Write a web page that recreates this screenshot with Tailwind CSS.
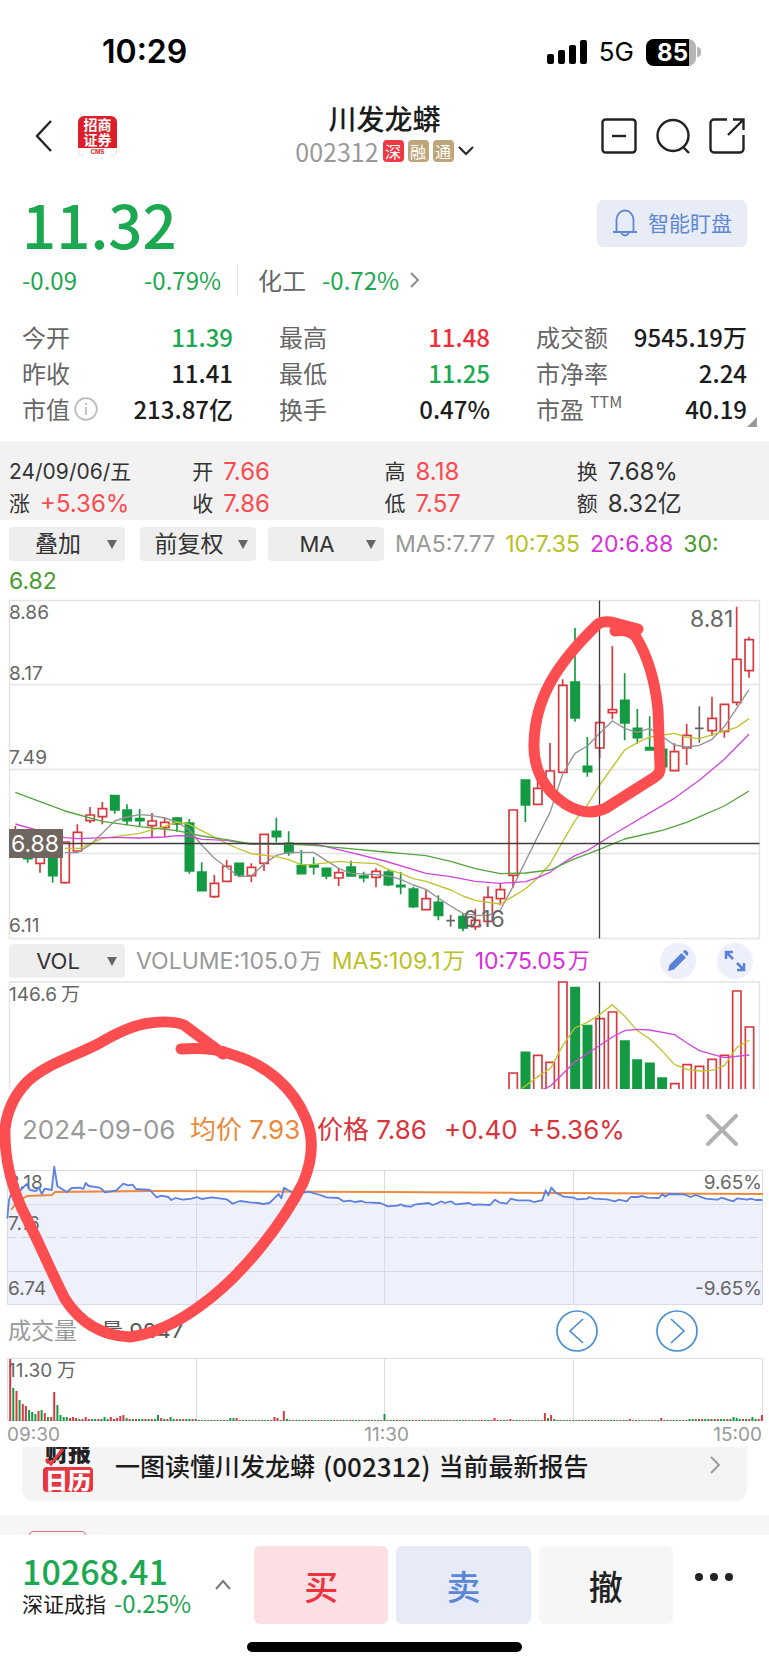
<!DOCTYPE html>
<html lang="zh-CN">
<head>
<meta charset="utf-8">
<meta name="viewport" content="width=device-width, initial-scale=1">
<title>川发龙蟒 002312</title>
<script src="https://cdn.jsdelivr.net/npm/@tailwindcss/browser@4"></script>
</head>
<body class="bg-white text-[#1c1c1c] font-['Noto_Sans_CJK_SC',sans-serif] overflow-x-hidden">

<!-- Status bar -->
<div class="flex items-center justify-between h-[101px] pt-[3px] pl-[102px] pr-[68px] font-['Inter','Noto_Sans_CJK_SC',sans-serif] text-black">
  <span class="text-[32px] leading-[36px] font-semibold">10:29</span>
  <div class="flex items-center">
    <svg class="w-10 h-6" viewBox="0 0 40 24"><rect x="0" y="14" width="7" height="10" rx="2"/><rect x="11" y="10" width="7" height="14" rx="2"/><rect x="22" y="5" width="7" height="19" rx="2"/><rect x="33" y="0" width="7" height="24" rx="2"/></svg>
    <span class="text-[26px] leading-[30px] ml-3">5G</span>
    <div class="ml-3 flex items-center">
      <div class="w-[50px] h-[27px] rounded-lg overflow-hidden flex bg-[#b5b5b5]"><span class="w-[43px] bg-black text-white font-bold text-[24px] leading-[27px] text-right pr-px">85</span></div>
      <span class="w-1 h-2.5 ml-px rounded-r-full bg-[#b5b5b5]"></span>
    </div>
  </div>
</div>

<!-- Title bar -->
<header class="grid grid-cols-[1fr_auto_1fr] items-center h-[70px] px-6 mb-[19px]">
  <div class="flex items-center gap-6 pl-2.5">
    <button aria-label="返回" class="w-5 h-9"><svg viewBox="0 0 20 36" class="w-5 h-9" fill="none" stroke="#222" stroke-width="2.4"><path d="M17 3 3 18l14 15"/></svg></button>
    <div class="w-[39px] h-10 rounded-md overflow-hidden bg-[#dc1e28] text-white text-[14px] leading-[15px] font-bold text-center flex flex-col justify-between">
      <div class="pt-px">招商<br>证券</div>
      <div class="bg-white text-[#dc1e28] text-[6px] leading-[8px] font-['Inter',sans-serif]">CMS</div>
    </div>
  </div>
  <div class="text-center pb-1">
    <h1 class="text-[28px] leading-[34px] font-medium">川发龙蟒</h1>
    <button class="flex items-center gap-1 h-8 text-[25px] leading-8 text-[#999]"><span>002312</span>
      <span class="w-[21px] h-[22px] rounded bg-[#ee3844] text-white text-[16px] leading-[22px]">深</span>
      <span class="w-[21px] h-[22px] rounded bg-[#bfa57a] text-white text-[16px] leading-[22px]">融</span>
      <span class="w-[21px] h-[22px] rounded bg-[#bfa57a] text-white text-[16px] leading-[22px]">通</span>
      <svg class="w-4 h-3" viewBox="0 0 16 12" fill="none" stroke="#222" stroke-width="2"><path d="m1 2 7 7 7-7"/></svg>
    </button>
  </div>
  <div class="flex items-center justify-end gap-[18px]">
    <button aria-label="移出自选"><svg class="size-9" viewBox="0 0 36 36" fill="none" stroke="#222" stroke-width="2.4"><rect x="1.500" y="1.500" width="33" height="33" rx="3"/><path d="M11 18h14"/></svg></button>
    <button aria-label="搜索"><svg class="size-9" viewBox="0 0 36 36" fill="none" stroke="#222" stroke-width="2.4"><circle cx="18" cy="17.500" r="15.500"/><path d="m28 29 6 6"/></svg></button>
    <button aria-label="分享"><svg class="size-9" viewBox="0 0 36 36" fill="none" stroke="#222" stroke-width="2.4"><path d="M18 1.500H5A3.500 3.500 0 0 0 1.500 5v26A3.500 3.500 0 0 0 5 34.500h26a3.500 3.500 0 0 0 3.500-3.500V17M19 17 34 2M24 1.500h10.500V12"/></svg></button>
  </div>
</header>

<!-- Quote -->
<section class="px-[22px]">
  <div class="flex items-center justify-between h-[66px]">
    <div class="text-[60px] leading-[66px] font-medium text-[#1ca850]">11.32</div>
    <button class="flex items-center justify-center gap-2.5 w-[150px] h-[47px] rounded-md bg-[#e8ecf7] text-[#5f87d3] text-[21px]">
      <svg class="w-[26px] h-7" viewBox="0 0 26 28" fill="none" stroke="#5f87d3" stroke-width="1.8"><path d="M1 23h24M4.500 23V11a8.500 9.500 0 0 1 17 0v12M9.500 23.500a3.500 3 0 0 0 7 0"/></svg>智能盯盘</button>
  </div>
  <div class="flex items-center h-10 mt-1 text-[24px] leading-10 text-[#1ca850]">
    <span class="w-[122px]">-0.09</span><span class="w-[93px]">-0.79%</span>
    <span class="w-px h-8 bg-[#e8e8e8]"></span>
    <a href="#" class="flex items-center ml-5"><span class="text-[#666] mr-4">化工</span><span>-0.72%</span>
      <svg class="w-3 h-5 ml-2.5" viewBox="0 0 12 20" fill="none" stroke="#888" stroke-width="1.800"><path d="m2 3 7 7-7 7"/></svg></a>
  </div>
  <dl class="relative grid grid-cols-3 gap-x-[46px] mt-[19px] text-[24px] leading-9 font-medium">
    <div class="flex justify-between"><dt class="text-[#666] font-normal">今开</dt><dd class="text-[#1ca850]">11.39</dd></div>
    <div class="flex justify-between"><dt class="text-[#666] font-normal">最高</dt><dd class="text-[#ed2f3b]">11.48</dd></div>
    <div class="flex justify-between"><dt class="text-[#666] font-normal">成交额</dt><dd>9545.19万</dd></div>
    <div class="flex justify-between"><dt class="text-[#666] font-normal">昨收</dt><dd>11.41</dd></div>
    <div class="flex justify-between"><dt class="text-[#666] font-normal">最低</dt><dd class="text-[#1ca850]">11.25</dd></div>
    <div class="flex justify-between"><dt class="text-[#666] font-normal">市净率</dt><dd>2.24</dd></div>
    <div class="flex justify-between"><dt class="text-[#666] font-normal flex items-center gap-1">市值<svg class="size-6" viewBox="0 0 24 24" fill="none" stroke="#bbb" stroke-width="1.700"><circle cx="12" cy="12" r="10.800"/><path d="M12 10v8M12 6v2"/></svg></dt><dd>213.87亿</dd></div>
    <div class="flex justify-between"><dt class="text-[#666] font-normal">换手</dt><dd>0.47%</dd></div>
    <div class="flex justify-between"><dt class="text-[#666] font-normal flex">市盈<span class="text-[16px] leading-5 ml-1.5">TTM</span></dt><dd>40.19</dd></div>
    <svg class="absolute -right-2.5 bottom-0 size-2.5" viewBox="0 0 10 10"><path d="M10 0v10H0z" fill="#999"/></svg>
  </dl>
</section>

<!-- Selected day -->
<section class="mt-[14px] pt-[15px] bg-[#f2f2f2] grid grid-cols-4 text-[24px] leading-8 text-[#333] font-['Inter','Noto_Sans_CJK_SC',sans-serif]">
  <div class="pl-[9px] text-[21px]">24/09/06/五</div>
  <div class="flex gap-2.5"><span class="text-[21px]">开</span><span class="text-[#fa4b50]">7.66</span></div>
  <div class="flex gap-2.5"><span class="text-[21px]">高</span><span class="text-[#fa4b50]">8.18</span></div>
  <div class="flex gap-2.5"><span class="text-[21px]">换</span><span>7.68%</span></div>
  <div class="pl-[9px] flex gap-2.5"><span class="text-[21px]">涨</span><span class="text-[#fa4b50]">+5.36%</span></div>
  <div class="flex gap-2.5"><span class="text-[21px]">收</span><span class="text-[#fa4b50]">7.86</span></div>
  <div class="flex gap-2.5"><span class="text-[21px]">低</span><span class="text-[#fa4b50]">7.57</span></div>
  <div class="flex gap-2.5"><span class="text-[21px]">额</span><span>8.32亿</span></div>
</section>

<!-- Overlay selectors and moving averages -->
<section class="px-[9px] pt-[7px] text-[23px] font-['Inter','Noto_Sans_CJK_SC',sans-serif]">
  <div class="flex items-center h-[34px] whitespace-nowrap">
    <button class="flex items-center justify-end w-[116px] h-[34px] rounded bg-[#eee] pr-2 text-[23px] text-[#333]"><span class="flex-1 text-center">叠加</span><span class="border-x-[5px] border-t-[9px] border-x-transparent border-t-[#666]"></span></button>
    <button class="flex items-center justify-end w-[116px] h-[34px] rounded bg-[#eee] pr-2 text-[23px] text-[#333] ml-[15px]"><span class="flex-1 text-center">前复权</span><span class="border-x-[5px] border-t-[9px] border-x-transparent border-t-[#666]"></span></button>
    <button class="flex items-center justify-end w-[116px] h-[34px] rounded bg-[#eee] pr-2 text-[22px] text-[#333] ml-3"><span class="flex-1 text-center">MA</span><span class="border-x-[5px] border-t-[9px] border-x-transparent border-t-[#666]"></span></button>
    <span class="ml-[11px] text-[#999]">MA5:7.77</span><span class="ml-2.5 text-[#b9c022]">10:7.35</span><span class="ml-2.5 text-[#d92fd9]">20:6.88</span><span class="ml-2.5 text-[#459b2c]">30:</span>
  </div>
  <div class="h-[38px] leading-[40px] text-[#459b2c]">6.82</div>
</section>

<!-- Daily candles -->
<svg class="block w-full font-['Inter',sans-serif]" viewBox="0 599 769 344" fill="none" role="img" aria-label="日K线图">
  <path d="M9.500 600.500h750v338h-750zM9.500 684.500h750M9.500 769.500h750M9.500 853.500h750" stroke="#e4e4e6" stroke-width="1.300"/>
  <g id="candles"></g>
  <g transform="translate(0 590) scale(.33333)" stroke-width="4" stroke-linejoin="round">
    <path stroke="#939393" d="M195 788h37l38-23 37-35 37-37 37-12 38-7 37 3 38 7 37 12 37 24 37 45 38 40 37 27 37 28 37-2 38-36 37-26 37-9h75l38 25 37 23 37 15 75 4 37 4 37 10 38 17 38 13 37 26 37 24 37 22 37 6h38l37-16 38-70 37-75 37-75 37-72 38-116 37-62 37-22 37-38 38-37 37 22 38 12 37-12 38 25 36 25 37 6 38-5 38-18 37-38 37-55 37-56"/>
    <path stroke="#c0c42c" d="M195 775h45l67-30 112-15 75-21 37-13 37 7 37 19 75 38 37 17 37 14 75 9 37 9 38 15 37-1 75-9 37 3 75 4 37 17 37 12 38 16 38 8 74 26 37 18 37 13 75 11 75-45 37-33 37-42 38-67 37-63 37-47 37-60 75-105 38-22 37-17 74-11 37 12 38 4 112-34 37-26"/>
    <path stroke="#d147d9" d="M46 702l74 21 75 20 37 3 112-4 75 2 75-3 37-4 37 1 37 10 75 3 74 12 187-1 38 8 74 18 102 25 123 37 74 10 74 14 75 6 75-5 37-12 37-16 38-27 37-23 37-15 75-47 186-110 75-54 75-63 74-75"/>
    <path stroke="#54a43d" d="M46 607l74 28 75 28 112 31 112 16 112 12 74 16 75 11 74 13h112l75 4 75 7 139 13 47 4 76 7 74 17 74 22 75 15 75-2 74-9 75-34 74-28 75-31 113-26 73-24 113-49 74-45"/>
  </g>
  <path d="M599.500 600.500v338M9.500 843.500h750" stroke="#403c3c" stroke-width="1.300"/>
  <g fill="#666" font-size="19"><text x="9" y="619">8.86</text><text x="9" y="680">8.17</text><text x="9" y="764">7.49</text><text x="9" y="932">6.11</text></g>
  <g fill="#666" font-size="23"><text x="690" y="627">8.81</text><text x="463" y="927">6.16</text></g>
  <path d="M9 829h54v29H9z" fill="#6e665f"/><text x="11" y="852" font-size="23" fill="#fff">6.88</text>
  <path d="M615 631Q629 629 636 637C650 660 656 690 658 710L660 766Q661 773 655 777L606 808C590 816 570 812 551 792Q533 772 534 743C535 700 555 665 598 624Q604 620 615 623L638 629" stroke="#fc4e50" stroke-width="11" stroke-linecap="round" stroke-linejoin="round"/>
</svg>

<div class="relative">
  <!-- Volume -->
  <section class="flex items-center h-[36px] px-[9px] text-[23px] whitespace-nowrap font-['Inter','Noto_Sans_CJK_SC',sans-serif]">
    <button class="flex items-center justify-end w-[116px] h-[34px] rounded bg-[#eee] pr-2 text-[22px] text-[#333]"><span class="flex-1 text-center">VOL</span><span class="border-x-[5px] border-t-[9px] border-x-transparent border-t-[#666]"></span></button>
    <span class="ml-[11px] text-[#999] flex gap-0.5"><span>VOLUME:105.0</span><span class="text-[22px]">万</span></span><span class="ml-2.5 text-[#b9c022] flex gap-0.5"><span>MA5:109.1</span><span class="text-[22px]">万</span></span><span class="ml-2.5 text-[#d92fd9] flex gap-0.5"><span>10:75.05</span><span class="text-[22px]">万</span></span>
    <div class="ml-auto mr-[7px] flex gap-[21px]">
      <button aria-label="画线" class="size-9 rounded-full bg-[#edf0fa] flex items-center justify-center"><svg class="size-6" viewBox="0 0 24 24" fill="#5a82d4"><path d="m2 22 1.500-6L15.500 4l4.500 4.500L8 20.500zM16.800 2.700 18 1.500q1.200-1 2.400 0L22 3.200q1 1.300 0 2.500l-1 1.300z"/></svg></button>
      <button aria-label="全屏" class="size-9 rounded-full bg-[#edf0fa] flex items-center justify-center"><svg class="size-6" viewBox="0 0 24 24" fill="none" stroke="#5a82d4" stroke-width="2.500"><path d="M3 10V3h7M3 3l7 7M21 14v7h-7M21 21l-7-7"/></svg></button>
    </div>
  </section>
  <svg class="block w-full font-['Inter','Noto_Sans_CJK_SC',sans-serif]" viewBox="0 980 769 110" fill="none" role="img" aria-label="成交量">
    <path d="M9.500 1090V983h750v107" stroke="#e4e4e6" stroke-width="1.300"/>
    <g id="volume"></g>
    <path d="M599.500 983v107" stroke="#403c3c" stroke-width="1.300"/>
    <g transform="translate(480 960) scale(.33333)" stroke-width="4"><path stroke="#c0c42c" d="M125 389l48-36 39-25 36-68 37-54 37-16 38-24 37-29 37 35 37 42 38 25 37 36 38 42 37 14 37 5 38-2 37-14 37-54 38-23"/><path stroke="#d147d9" d="M190 390l22-9 36-36 37-37 112-74 37-19 37-4 38 2 75 14 37 25 37 23 75 21 75-8"/></g>
    <g font-size="19" fill="#666"><text x="9" y="1002">146.6</text><text x="61" y="1002">万</text></g>
  </svg>

  <!-- Intraday panel -->
  <section class="font-['Inter','Noto_Sans_CJK_SC',sans-serif]">
    <div class="flex items-center h-[77px] pt-1 pl-[22px] pr-[31px] text-[26px] whitespace-nowrap text-[#d9343a]">
      <span class="text-[#999] w-[168px]">2024-09-06</span><span class="text-[#e8893a] w-[127px]">均价 7.93</span><span class="w-[127px]">价格 7.86</span><span class="w-[84px]">+0.40</span><span>+5.36%</span>
      <button aria-label="关闭" class="ml-auto"><svg class="size-8" viewBox="0 0 32 32" fill="none" stroke="#b2b2b2" stroke-width="4" stroke-linecap="round"><path d="m2 2 28 28M30 2 2 30"/></svg></button>
    </div>
    <svg class="block w-full" viewBox="0 1166 769 140" fill="none" role="img" aria-label="分时图">
      <path id="fillArea" fill="#eef0fc"/>
      <path d="M7.500 1170.500h755v134h-755zM7.500 1204.500h755M7.500 1271.500h755M196.500 1170.500v134M384.500 1170.500v134M573.500 1170.500v134" stroke="#d9dbe4"/>
      <path d="M7.500 1237.500h755" stroke="#d3d5de" stroke-dasharray="9 4"/>
      <g font-size="19" fill="#666"><text x="8" y="1189">8.18</text><text x="8" y="1230">7.16</text><text x="8" y="1295">6.74</text><text x="762" y="1189" text-anchor="end">9.65%</text><text x="762" y="1295" text-anchor="end">-9.65%</text></g>
      <path d="M11 1210l6-8 10-6 25-1 3-3 95-1 235 1 378 2" stroke="#ee8a3c" stroke-width="2"/>
      <path id="priceLine" stroke="#5b80e0" stroke-width="1.800" stroke-linejoin="round"/>
    </svg>
    <div class="flex items-center h-[50px] pl-2 text-[22px]">
      <span class="w-[93px] text-[23px] text-[#999]">成交量</span><span class="text-[#555] leading-[34px]">量 9847</span>
      <div class="ml-auto mr-[71px] flex gap-[58px]">
        <button aria-label="前一日"><svg class="block size-[42px]" viewBox="0 0 42 42" fill="none" stroke="#4a90d0" stroke-width="1.700"><circle cx="21" cy="21" r="20"/><path d="M27 9 14 21l13 12"/></svg></button>
        <button aria-label="后一日"><svg class="block size-[42px]" viewBox="0 0 42 42" fill="none" stroke="#4a90d0" stroke-width="1.700"><circle cx="21" cy="21" r="20"/><path d="m15 9 13 12-13 12"/></svg></button>
      </div>
    </div>
    <svg class="block w-full" viewBox="0 1356 769 66" fill="none" role="img" aria-label="分时成交量">
      <path d="M7.500 1358.500h755v62h-755zM196.500 1358.500v62M384.500 1358.500v62M573.500 1358.500v62" stroke="#dedee0"/>
      <g id="minutes"></g>
      <g font-size="19" fill="#666"><text x="8" y="1377">11.30</text><text x="57" y="1377">万</text></g>
    </svg>
    <div class="flex justify-between h-[25px] px-[7px] text-[19px] leading-[26px] text-[#999]"><span>09:30</span><span>11:30</span><span>15:00</span></div>
  </section>

  <!-- Hand-drawn ring; the white patch hides the lower edge of the volume reading -->
  <svg class="absolute inset-x-0 top-0 w-full pointer-events-none" viewBox="0 944 769 503" fill="none" stroke="#fc4e50" stroke-width="11" stroke-linecap="round" stroke-linejoin="round"><path d="M98 1339h92v8H98z" fill="#fff" stroke="none"/><path d="M181 1050Q213 1048 230 1055C267 1065 294 1090 306 1120Q318 1148 303 1184C285 1220 245 1275 200 1307Q165 1333 130 1338Q88 1336 65 1300C52 1275 40 1245 22 1210Q4 1170 5 1130Q8 1102 28 1082C45 1066 70 1059 98 1045Q130 1026 150 1024Q172 1021 184 1026L223 1055"/></svg>
</div>

<!-- Report banner -->
<a href="#" class="flex items-start mx-[22px] h-[54px] rounded-b-xl bg-[#f4f4f4] overflow-hidden pl-[21px] pr-[26px]">
  <span class="relative -mt-2.5 w-[50px] text-center font-black text-[23px] leading-7">
    <span class="block text-[#222]">财报</span>
    <span class="block h-[25px] mt-0.5 rounded bg-[#e8353f] text-white leading-[25px]">日历</span>
    <svg class="absolute left-0 top-2.5 w-6 h-5" viewBox="0 0 24 20" fill="none" stroke="#e8353f" stroke-width="3"><path d="m3 12 5 5 12-15"/></svg>
  </span>
  <span class="ml-[22px] text-[25px] leading-[37px] font-medium whitespace-nowrap flex gap-2"><span>一图读懂川发龙蟒</span><span class="text-[26px]">(002312)</span><span>当前最新报告</span></span>
  <svg class="ml-auto w-3 h-6 mt-1.5" viewBox="0 0 12 24" fill="none" stroke="#999" stroke-width="1.800"><path d="m2 4 8 8-8 8"/></svg>
</a>
<div class="mt-[14px] h-5 bg-[#f6f6f6] overflow-hidden pl-[29px] pt-4"><div class="w-[57px] h-6 rounded-sm border border-[#e07080]"></div></div>

<!-- Trade bar -->
<footer class="pt-[11px]">
  <div class="flex h-[78px] pl-[22px] pr-9">
    <a href="#" class="flex items-center w-[232px] shrink-0">
      <span class="w-[186px] pb-2"><span class="block text-[34px] leading-[44px] font-medium text-[#1ca850]">10268.41</span>
      <span class="flex gap-2 text-[21px] leading-5 whitespace-nowrap"><span>深证成指</span><span class="text-[24px] text-[#1ca850]">-0.25%</span></span></span>
      <svg class="w-[18px] h-3 ml-1.5" viewBox="0 0 18 12" fill="none" stroke="#777" stroke-width="2"><path d="m2 10 7-8 7 8"/></svg>
    </a>
    <div class="flex flex-1 gap-2 text-[34px] font-medium">
      <button class="flex-1 rounded-md bg-[#fcdfe2] text-[#ee333f]">买</button>
      <button class="flex-1 rounded-md bg-[#e7ebf8] text-[#5b87d6]">卖</button>
      <button class="flex-1 rounded-md bg-[#f6f6f6] text-[#222]">撤</button>
    </div>
    <button aria-label="更多" class="flex gap-[7px] items-center ml-[22px] h-[62px]"><i class="size-[8px] rounded-full bg-[#222]"></i><i class="size-[8px] rounded-full bg-[#222]"></i><i class="size-[8px] rounded-full bg-[#222]"></i></button>
  </div>
  <div class="mx-auto mt-[18px] mb-[14px] w-[275px] h-[10px] rounded-full bg-black"></div>
</footer>

<script>
const RED = '#d8393f', GREEN = '#149a42';
// Daily bars: x, high, low, body top, body bottom, r/g/n
const bars = [[46,708,800,740,790,'r'],[83,790,818,795,806,'g'],[120,790,848,795,820,'r'],[158,790,878,795,857,'g'],[195,756,881,756,878,'r'],[232,703,785,727,783,'r'],[270,651,700,675,692,'r'],[307,636,703,656,680,'r'],[344,614,671,617,660,'g'],[381,643,706,660,692,'g'],[419,657,708,686,692,'g'],[456,669,743,693,707,'r'],[494,681,741,697,713,'r'],[531,681,725,684,702,'g'],[568,687,851,699,843,'g'],[605,817,902,846,902,'g'],[643,855,924,880,920,'r'],[680,809,874,829,874,'r'],[717,820,860,820,855,'g'],[754,820,877,832,857,'r'],[792,733,843,733,820,'r'],[829,683,757,724,740,'g'],[866,724,797,760,788,'g'],[904,780,851,827,851,'g'],[941,802,854,825,831,'g'],[979,835,868,835,858,'g'],[1016,835,888,848,864,'r'],[1053,812,858,831,858,'g'],[1091,845,877,858,863,'g'],[1128,835,892,844,862,'r'],[1165,838,889,846,884,'g'],[1202,846,913,886,890,'g'],[1240,890,954,897,950,'g'],[1278,899,960,926,959,'r'],[1315,916,991,937,976,'g'],[1352,974,1010,992,992,'n'],[1389,970,1024,980,1014,'g'],[1426,957,1020,991,1010,'r'],[1464,889,994,922,994,'r'],[1501,882,946,899,926,'r'],[1539,660,893,660,856,'r'],[1576,570,696,570,645,'g'],[1613,570,643,595,643,'r'],[1650,459,600,543,600,'r'],[1688,268,547,286,547,'r'],[1725,114,395,276,384,'g'],[1762,441,560,529,545,'g'],[1799,285,505,398,474,'r'],[1837,168,388,359,368,'r'],[1874,250,451,331,399,'g'],[1912,357,461,415,443,'g'],[1949,379,480,473,480,'g'],[1987,478,530,478,530,'g'],[2023,460,542,485,542,'r'],[2060,401,525,436,474,'r'],[2098,349,458,415,415,'n'],[2136,320,438,385,422,'r'],[2173,343,443,343,424,'r'],[2210,50,347,208,337,'r'],[2247,140,263,149,242,'r']];
document.getElementById('candles').innerHTML = '<g transform="translate(0 590) scale(.33333)" stroke-width="5">' + bars.map(([x,h,l,t,b,k]) => {
  if (k === 'n') return `<path stroke="#666" d="M${x} ${h}V${l}M${x-13} ${t}h26"/>`;
  const c = k === 'r' ? RED : GREEN;
  return `<path stroke="${c}" fill="${k==='r'?'none':c}" d="M${x} ${h}V${t}M${x} ${b}V${l}M${x-12} ${t}h25v${b-t}h-25z"/>`;
}).join('') + '</g>';
const vols = [[99,342,'r'],[136,280,'g'],[173,289,'r'],[210,310,'r'],[248,69,'r'],[285,86,'g'],[322,200,'g'],[360,179,'r'],[397,159,'r'],[434,246,'g'],[471,303,'g'],[509,313,'g'],[546,357,'g'],[584,374,'r'],[621,317,'r'],[658,322,'r'],[696,301,'r'],[733,289,'r'],[770,96,'r'],[808,204,'r']];
document.getElementById('volume').innerHTML = '<g transform="translate(480 960) scale(.33333)" stroke-width="5">' + vols.map(([x,t,k]) => `<path stroke="${k==='r'?RED:GREEN}" fill="${k==='r'?'none':GREEN}" d="M${x-12} 391V${t}h25V391"/>`).join('') + '</g>';
// Intraday price, x/y pairs at three units per pixel
const p = [22,355,27,300,40,262,47,275,60,272,80,252,90,270,108,273,117,262,125,282,134,266,155,270,163,200,172,258,200,276,215,264,240,263,250,267,257,249,266,258,295,262,305,267,315,277,348,272,370,251,384,256,398,254,408,267,450,270,470,292,484,287,505,291,514,300,527,294,548,299,575,296,590,291,605,297,635,292,680,298,698,311,720,303,750,307,775,309,790,312,808,309,822,296,836,282,844,295,852,263,868,272,890,282,925,275,960,285,980,292,1015,294,1030,304,1050,302,1065,306,1085,303,1095,307,1140,309,1155,315,1162,319,1192,317,1202,313,1212,318,1232,320,1247,313,1287,309,1297,315,1312,310,1324,304,1334,309,1352,304,1367,313,1407,309,1420,315,1437,313,1470,315,1485,299,1497,307,1520,311,1532,296,1552,301,1587,301,1602,306,1627,300,1637,271,1645,286,1654,263,1667,278,1692,290,1722,293,1732,298,1762,296,1768,291,1782,296,1822,298,1844,304,1857,299,1880,304,1892,291,1912,291,1927,288,1942,293,1977,294,1987,282,1995,290,2007,282,2052,283,2072,291,2087,285,2117,296,2152,299,2164,293,2200,304,2212,295,2242,299,2252,296,2267,300,2287,300];
let line = '';
for (let i = 0; i < p.length; i += 2) line += (i ? 'L' : 'M') + (p[i]/3).toFixed(1) + ' ' + (1100 + p[i+1]/3).toFixed(1);
document.getElementById('priceLine').setAttribute('d', line);
document.getElementById('fillArea').setAttribute('d', line + 'V1304.5H7.5Z');
// Minute volume: slot index -> height and side
const tall = {0:[62,'r'],1:[33,'g'],2:[30,'r'],3:[21,'g'],4:[17,'r'],5:[15,'r'],6:[11,'g'],7:[9,'g'],8:[7,'g'],9:[10,'r'],10:[11,'g'],11:[8,'r'],12:[4,'g'],13:[4,'r'],14:[29,'r'],15:[16,'g'],16:[6,'g'],17:[4,'g'],18:[4,'g'],19:[3,'r'],20:[4,'r'],21:[3,'r'],24:[4,'r'],30:[4,'g'],32:[4,'r'],34:[3,'r'],35:[5,'r'],36:[6,'r'],37:[3,'g'],47:[6,'g'],48:[3,'r'],51:[4,'g'],70:[3,'g'],71:[3,'g'],72:[3,'r'],84:[4,'r'],85:[3,'r'],87:[10,'r'],88:[2,'g'],119:[7,'g'],154:[3,'r'],159:[2,'r'],170:[8,'r'],171:[3,'g'],172:[6,'r'],173:[2,'g'],197:[2,'r'],207:[3,'r'],230:[4,'g'],231:[3,'g'],236:[4,'g'],239:[6,'r']};
let m = '';
for (let i = 0; i < 240; i++) {
  const [h, k] = tall[i] || [i < 60 || i > 215 ? 2 : 1, (i * 7) % 5 < 2 ? 'r' : 'g'];
  m += `<path stroke="${k==='r'?RED:GREEN}" stroke-width="2" d="M${(10.2 + i*3.145).toFixed(1)} 1421v-${h}"/>`;
}
document.getElementById('minutes').innerHTML = m;
</script>
</body>
</html>
